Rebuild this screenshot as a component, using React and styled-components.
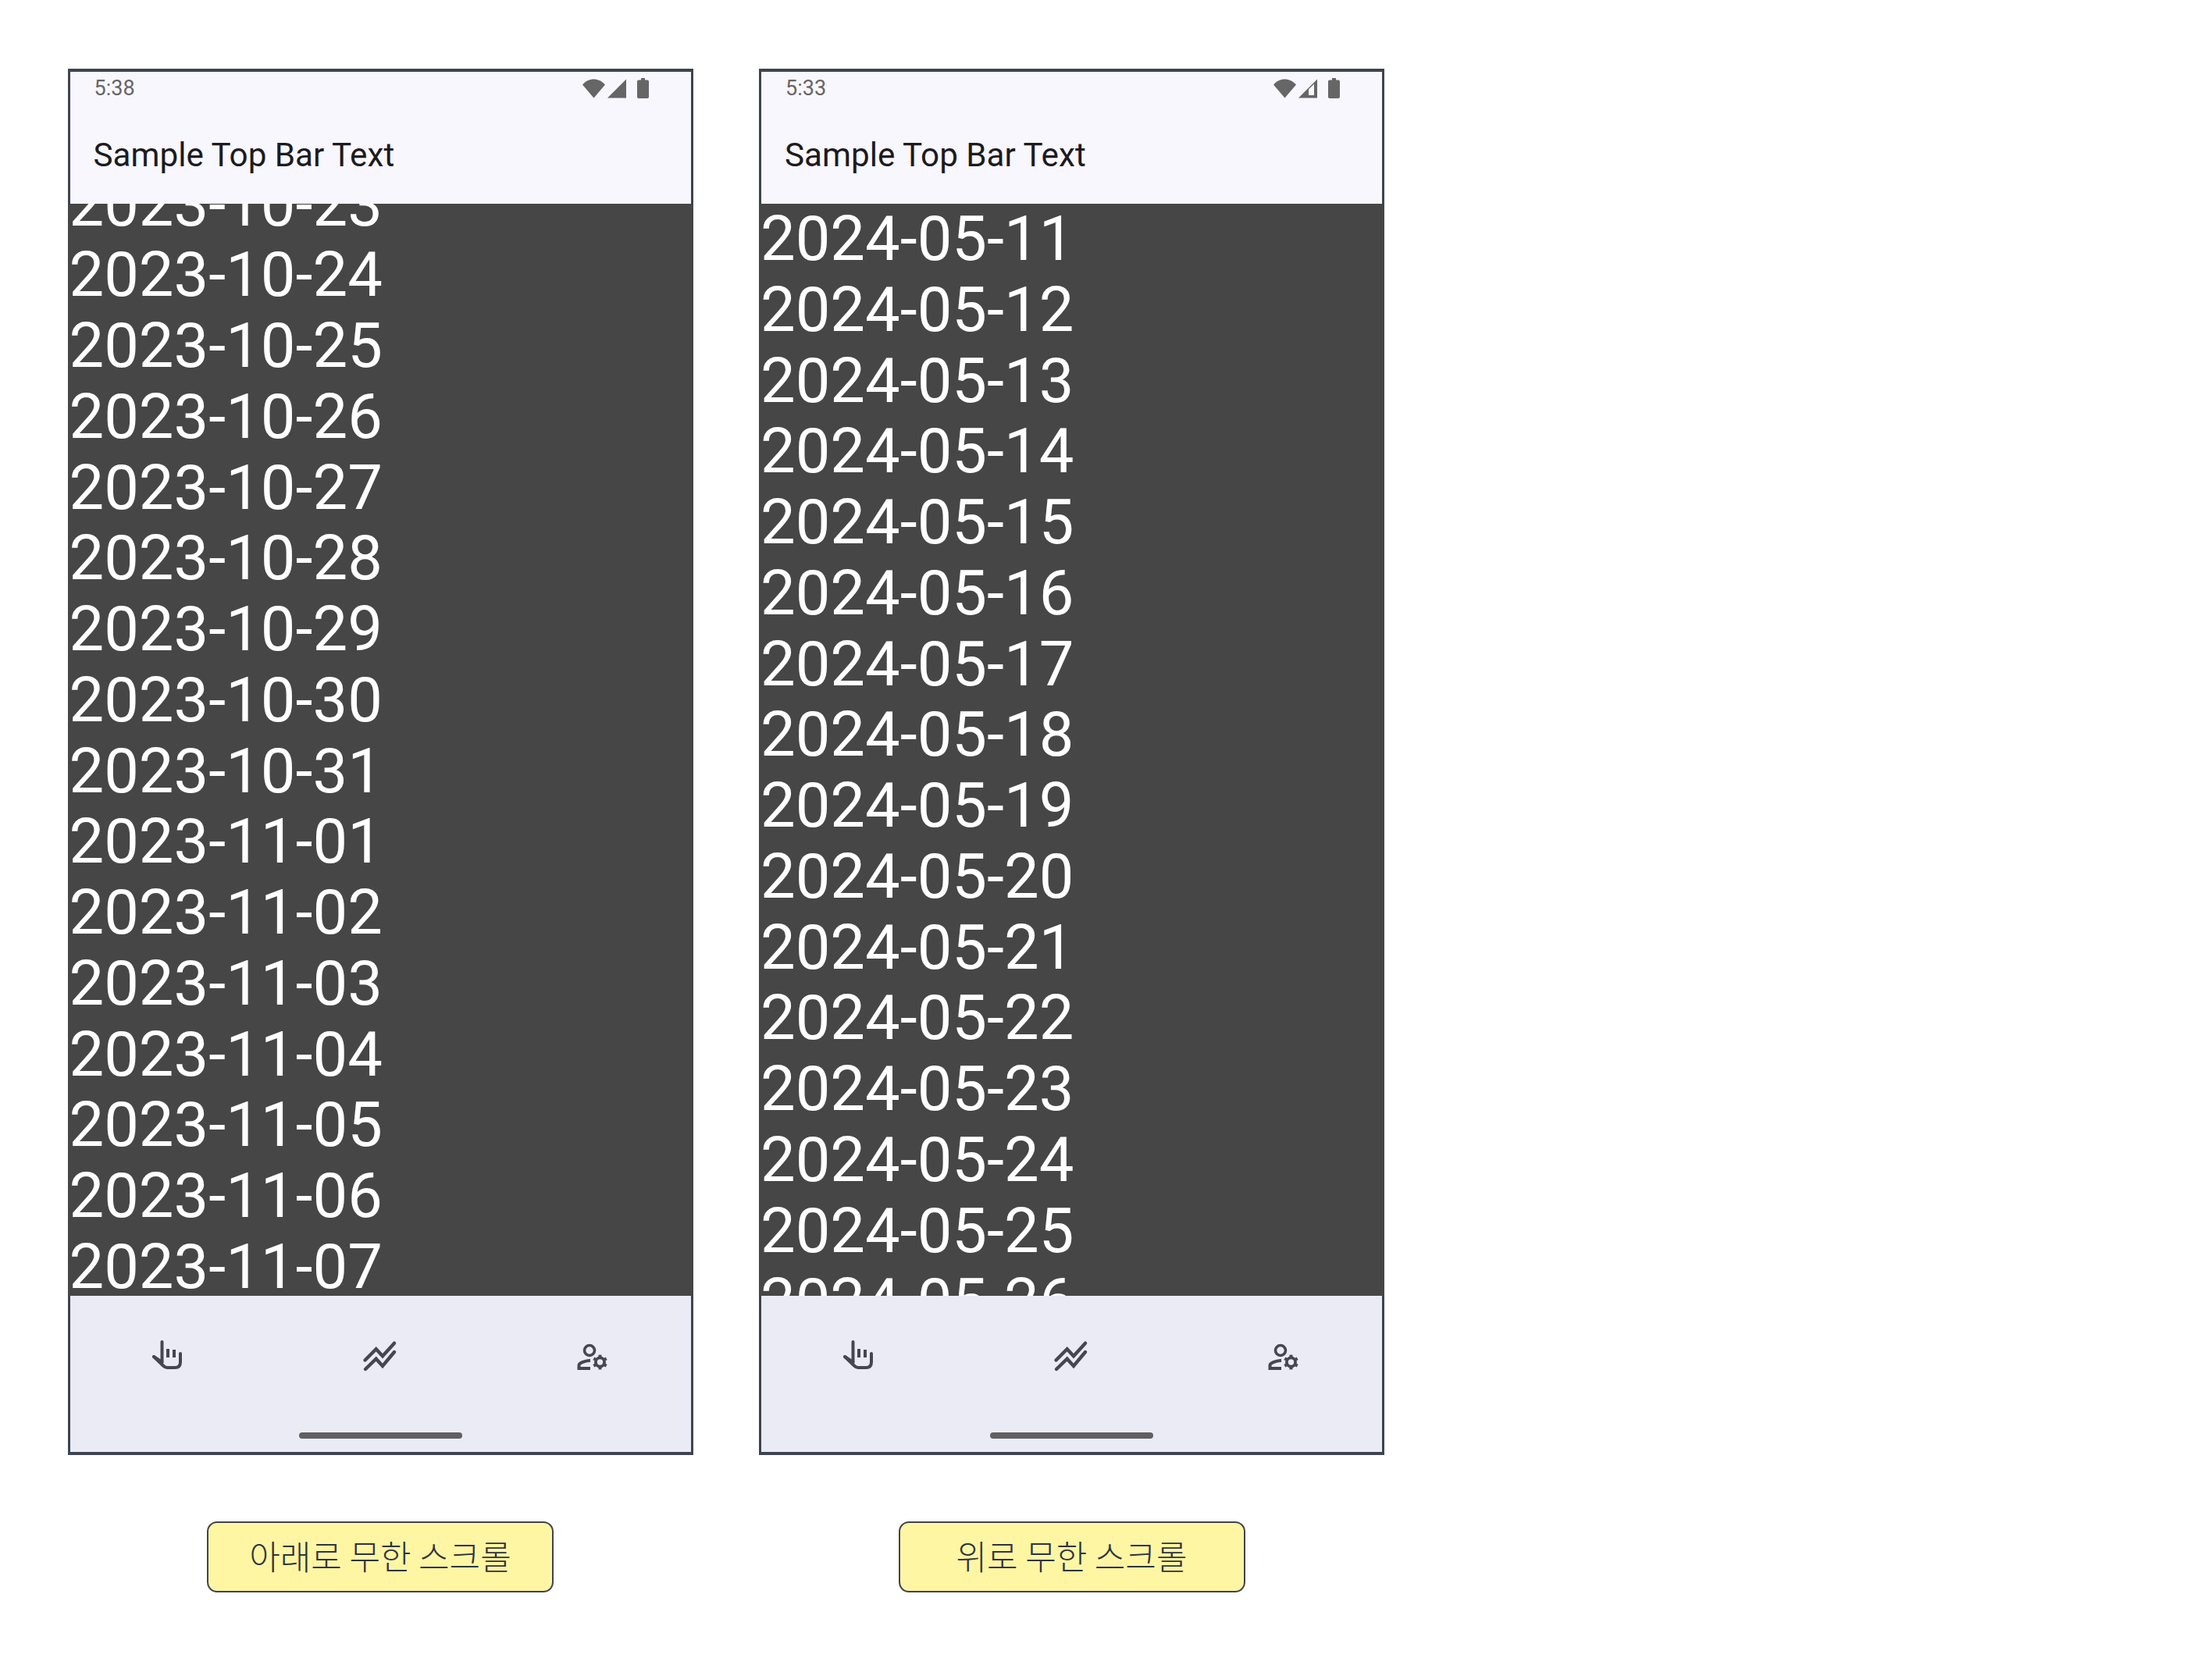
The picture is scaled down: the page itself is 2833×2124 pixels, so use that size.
import React from "react"
import styled, { createGlobalStyle } from "styled-components"

const GlobalStyle = createGlobalStyle`
  html, body {
    margin: 0;
    background: #fff;
    font-family: Roboto, "Noto Sans CJK KR", sans-serif;
  }
`

const Page = styled.div`
  display: flex;
  gap: 84.5px;
  padding: 88px 0 0 86.5px;
`

const Column = styled.div`
  display: flex;
  flex-direction: column;
  align-items: center;
  width: 801px;
`

const Phone = styled.div`
  display: flex;
  flex-direction: column;
  box-sizing: border-box;
  width: 100%;
  height: 1776px;
  border: 3px solid #3e4450;
  border-width: 4px 3px;
  background: #464646;
`

const TopBar = styled.div`
  flex: none;
  display: flex;
  flex-direction: column;
  height: 169px;
  background: #f8f7fe;
`

const StatusBar = styled.div`
  display: flex;
  align-items: center;
  justify-content: space-between;
  height: 42px;
  padding: 0 54px 0 31px;
`

const Clock = styled.span`
  font-size: 27px;
  color: #666;
`

const StatusIcons = styled.div`
  display: flex;
  align-items: center;
  gap: 3px;
`

const BatteryIcon = styled.svg`
  margin-left: 11px;
`

const BarTitle = styled.div`
  padding: 39px 0 0 30px;
  font-size: 42.2px;
  line-height: 52px;
  color: #1c1b1f;
`

const DateList = styled.div`
  flex: 1;
  min-height: 0;
  overflow: hidden;
  margin: 0 -3px;
  padding-left: 2px;
  background: #464646;
`

const DateRow = styled.div`
  height: 90.75px;
  font-size: 79.5px;
  line-height: 90.75px;
  color: #fff;
  white-space: nowrap;

  &:first-child {
    margin-top: ${props => props.$offset}px;
  }
`

const BottomNav = styled.div`
  flex: none;
  display: flex;
  flex-direction: column;
  height: 200px;
  background: #ebebf5;
`

const NavItems = styled.div`
  display: grid;
  grid-template-columns: repeat(3, 271px);
  justify-content: center;
  padding: 44px 1px 0 0;
`

const NavItem = styled.div`
  display: flex;
  justify-content: center;
  color: #444650;
`

const HomeIndicator = styled.div`
  align-self: center;
  width: 209px;
  height: 8px;
  margin-top: auto;
  margin-bottom: 17px;
  border-radius: 4px;
  background: #605f64;
`

const ActionButton = styled.div`
  display: flex;
  align-items: center;
  justify-content: center;
  box-sizing: border-box;
  width: 444px;
  height: 91px;
  margin-top: 85px;
  padding-bottom: 6px;
  border: 2px solid #3e4450;
  border-radius: 13px;
  background: #fff6a3;
  font-family: "Noto Sans CJK KR", sans-serif;
  font-size: 43px;
  font-weight: 300;
  color: #2e3440;
`

const HandIcon = () => (
  <svg width="66" height="66" viewBox="0 0 66 66" fill="none" stroke="currentColor" strokeWidth="4" strokeLinecap="round" strokeLinejoin="round">
    <path d="M24.5 15V41" />
    <path d="M32 24V35" strokeLinecap="butt" />
    <path d="M40 25V35" strokeLinecap="butt" />
    <path d="M48 30V41C48 46 45 48 41 48H31C29 48 27.5 47 26 45.5L14 34" />
    <path d="M14 34L24.5 41" />
  </svg>
)

const ChartIcon = () => (
  <svg width="66" height="66" viewBox="0 0 66 66" fill="none" stroke="currentColor" strokeWidth="4.4" strokeLinecap="round">
    <path d="M13.5 38.5L27.7 24.3L36 33.3L51 16.7" />
    <path d="M14 50L27.7 36.7L36 46L51 28" />
  </svg>
)

const gearTeeth = [0, 60, 120, 180, 240, 300]

const UserGearIcon = () => (
  <svg width="66" height="66" viewBox="0 0 66 66" fill="none" stroke="currentColor" strokeWidth="4">
    <circle cx="30" cy="26" r="6.5" strokeWidth="3.6" />
    <path d="M31 38.8C23 39.5 16.5 42 16.5 45V49H31" />
    <circle cx="43.5" cy="41" r="5.6" strokeWidth="3.8" />
    {gearTeeth.map(angle => (
      <path key={angle} d="M43.5 31.6V34" strokeWidth="4" transform={`rotate(${angle} 43.5 41)`} />
    ))}
  </svg>
)

const WifiIcon = () => (
  <svg width="29" height="25" viewBox="0 0 29 25">
    <path d="M0 7.5C7.5 -2 21 -2 29 7.5L14.5 24.5Z" fill="#666" />
  </svg>
)

const SignalIcon = ({ weak }) => (
  <svg width="24" height="25" viewBox="0 0 24 25">
    <path d="M0 24.5L24 0.5V24.5Z" fill="#666" />
    {weak && <path d="M13 13.5L20 6.5V21H13Z" fill="#f8f7fe" />}
  </svg>
)

const Battery = () => (
  <BatteryIcon width="15" height="26" viewBox="0 0 15 26">
    <path d="M5 0H10V2.5H13C14.2 2.5 15 3.3 15 4.5V24C15 25.2 14.2 26 13 26H2C.8 26 0 25.2 0 24V4.5C0 3.3 .8 2.5 2 2.5H5Z" fill="#666" />
  </BatteryIcon>
)

const makeDates = (start, count) => {
  const first = new Date(`${start}T00:00:00Z`)
  return Array.from({ length: count }, (_, i) =>
    new Date(first.getTime() + i * 86400000).toISOString().slice(0, 10)
  )
}

const screens = [
  { clock: "5:38", start: "2023-10-23", offset: -44.5, weak: false, label: "아래로 무한 스크롤" },
  { clock: "5:33", start: "2024-05-11", offset: 0, weak: true, label: "위로 무한 스크롤" },
]

const App = () => (
  <>
    <GlobalStyle />
    <Page>
      {screens.map(screen => (
        <Column key={screen.clock}>
          <Phone>
            <TopBar>
              <StatusBar>
                <Clock>{screen.clock}</Clock>
                <StatusIcons>
                  <WifiIcon />
                  <SignalIcon weak={screen.weak} />
                  <Battery />
                </StatusIcons>
              </StatusBar>
              <BarTitle>Sample Top Bar Text</BarTitle>
            </TopBar>
            <DateList>
              {makeDates(screen.start, 16).map(date => (
                <DateRow key={date} $offset={screen.offset}>{date}</DateRow>
              ))}
            </DateList>
            <BottomNav>
              <NavItems>
                <NavItem><HandIcon /></NavItem>
                <NavItem><ChartIcon /></NavItem>
                <NavItem><UserGearIcon /></NavItem>
              </NavItems>
              <HomeIndicator />
            </BottomNav>
          </Phone>
          <ActionButton>{screen.label}</ActionButton>
        </Column>
      ))}
    </Page>
  </>
)

export default App
